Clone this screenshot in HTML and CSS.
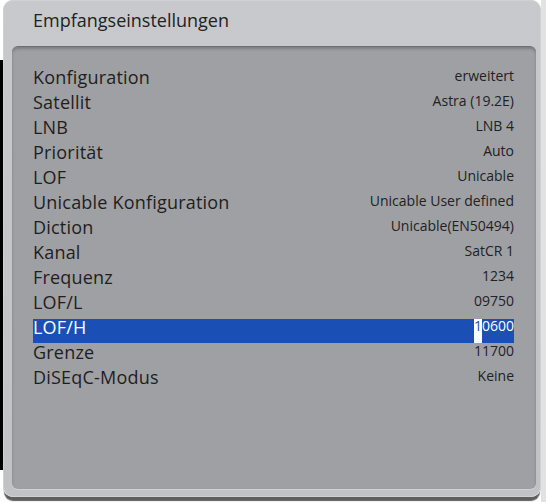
FILE: index.html
```html
<!DOCTYPE html>
<html lang="de">
<head>
<meta charset="utf-8">
<title>Empfangseinstellungen</title>
<link rel="stylesheet" href="styles.css">
</head>
<body>
<div class="frame">
  <div class="title">Empfangseinstellungen</div>
  <div class="panel">
    <div class="row"><span class="label">Konfiguration</span><span class="value">erweitert</span></div>
    <div class="row"><span class="label">Satellit</span><span class="value">Astra (19.2E)</span></div>
    <div class="row"><span class="label">LNB</span><span class="value">LNB 4</span></div>
    <div class="row"><span class="label">Priorität</span><span class="value">Auto</span></div>
    <div class="row"><span class="label">LOF</span><span class="value">Unicable</span></div>
    <div class="row"><span class="label">Unicable Konfiguration</span><span class="value">Unicable User defined</span></div>
    <div class="row"><span class="label">Diction</span><span class="value">Unicable(EN50494)</span></div>
    <div class="row"><span class="label">Kanal</span><span class="value">SatCR 1</span></div>
    <div class="row"><span class="label">Frequenz</span><span class="value">1234</span></div>
    <div class="row"><span class="label">LOF/L</span><span class="value">09750</span></div>
    <div class="row selected"><span class="label">LOF/H</span><span class="value edit"><span class="cursor">1</span><span class="rest">0600</span></span></div>
    <div class="row"><span class="label">Grenze</span><span class="value">11700</span></div>
    <div class="row"><span class="label">DiSEqC-Modus</span><span class="value">Keine</span></div>
  </div>
</div>
</body>
</html>
```
FILE: styles.css
```css
html, body {
  margin: 0;
  padding: 0;
}
body {
  width: 546px;
  height: 502px;
  overflow: hidden;
  background:
    linear-gradient(to right, #000 3px, transparent 3px) no-repeat 0 60px / 3px 410px,
    linear-gradient(to right, transparent 541px, #e2e2e2 541px) no-repeat 0 0 / 546px 502px,
    #ffffff;
  font-family: "Open Sans", "Noto Sans", sans-serif;
  color: #1e1e1e;
}
.frame {
  margin-left: 3px;
  width: 538px;
  height: 497px;
  box-sizing: border-box;
  border-radius: 10px;
  background: linear-gradient(#c7c9cd, #c0c2c6);
  box-shadow: 0 5px 1px -1px #5e5e5e, inset 0 0 0 1px #cfd1d4;
  display: flex;
  flex-direction: column;
  padding: 0 5px 8px 9px;
}
.title {
  height: 46px;
  box-sizing: border-box;
  padding-left: 21px;
  font-size: 18px;
  line-height: 20px;
  padding-top: 10px;
  color: #222;
}
.panel {
  flex: 1;
  background: #9fa0a4;
  border-radius: 6px;
  border-top: 1px solid #6e6f73;
  box-shadow: inset 0 2px 3px rgba(0,0,0,0.22), 0 1px 0 #d0d2d5;
  padding: 22px 22px 0 21px;
  display: flex;
  flex-direction: column;
  gap: 1px;
}
.row {
  height: 24px;
  display: flex;
  justify-content: space-between;
  align-items: flex-start;
}
.label {
  font-size: 18px;
  line-height: 16px;
  letter-spacing: 0.2px;
}
.value {
  font-size: 14px;
  line-height: 14px;
  color: #222;
}
.selected {
  background: #1a50b6;
  color: #fff;
}
.selected .value {
  color: #fff;
}
.edit {
  display: flex;
  align-self: stretch;
}
.cursor {
  background: #fff;
  color: #1a50b6;
  height: 24px;
}
```
